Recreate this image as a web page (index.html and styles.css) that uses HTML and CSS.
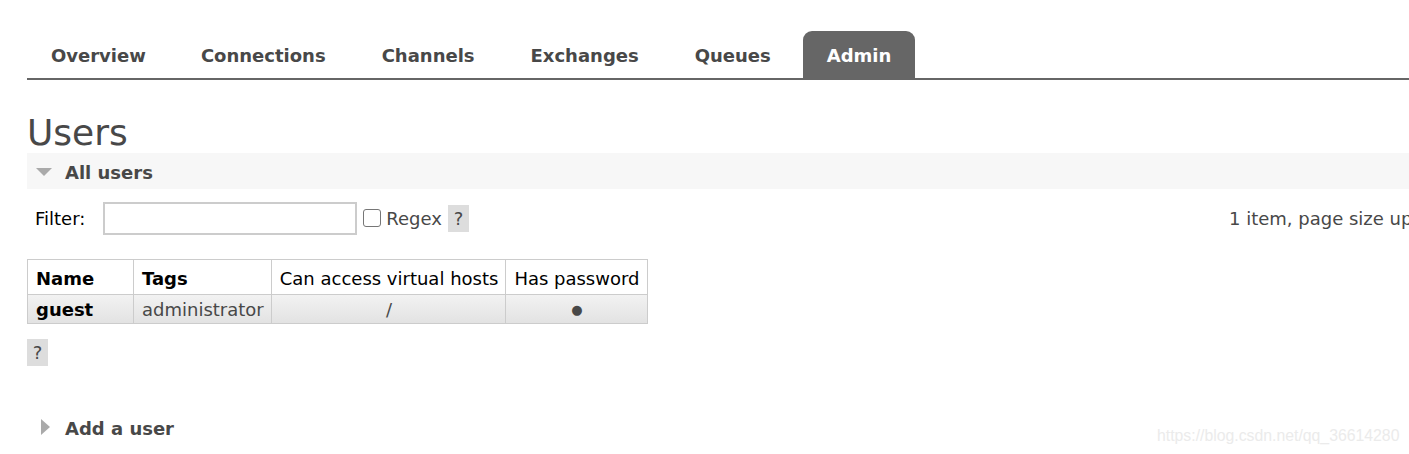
FILE: index.html
```html
<!DOCTYPE html>
<html>
<head>
<meta charset="utf-8">
<link rel="stylesheet" href="styles.css">
</head>
<body>
<div class="page">
  <nav class="tabs">
    <a class="tab">Overview</a>
    <a class="tab">Connections</a>
    <a class="tab">Channels</a>
    <a class="tab">Exchanges</a>
    <a class="tab">Queues</a>
    <a class="tab active">Admin</a>
  </nav>

  <h1 class="title">Users</h1>

  <div class="section-head open"><span class="tri-down"></span>All users</div>

  <div class="filter-row">
    <div class="filter-left">
      <label class="filter-label">Filter:</label>
      <input class="filter-input" type="text">
      <span class="check"></span>
      <span class="regex">Regex</span>
      <span class="help">?</span>
    </div>
    <div class="filter-right">1 item, page size up to: <span class="page-size">100</span></div>
  </div>

  <table class="users">
    <thead>
      <tr>
        <th class="bold col-name">Name</th>
        <th class="bold">Tags</th>
        <th>Can access virtual hosts</th>
        <th>Has password</th>
      </tr>
    </thead>
    <tbody>
      <tr>
        <td class="user">guest</td>
        <td class="tags">administrator</td>
        <td class="center">/</td>
        <td class="center dot">●</td>
      </tr>
    </tbody>
  </table>

  <span class="help help-table">?</span>

  <div class="section-head closed"><span class="tri-right"></span>Add a user</div>
</div>
<div class="watermark">https://blog.csdn.net/qq_36614280</div>
</body>
</html>
```

FILE: styles.css
```css
html, body {
  margin: 0;
  padding: 0;
  overflow: hidden;
  background: #fff;
}
body {
  font-family: "DejaVu Sans", Verdana, sans-serif;
  font-size: 18px;
  color: #484848;
  width: 1409px;
  height: 454px;
  position: relative;
}
.page {
  padding-left: 27px;
  width: 1700px;
}
.tabs {
  display: flex;
  gap: 8px;
  padding-top: 31px;
  border-bottom: 2px solid #666;
  height: 47px;
  box-sizing: content-box;
}
.tab {
  display: block;
  padding: 0 24px;
  height: 47px;
  line-height: 50px;
  font-weight: bold;
  color: #484848;
  border-radius: 9px 9px 0 0;
}
.tab:first-child {
  margin-right: -1px;
}
.tab.active {
  background: #666;
  color: #fff;
}
.title {
  margin: 0;
  font-size: 36px;
  font-weight: normal;
  color: #484848;
  height: 73px;
  line-height: 105px;
  overflow: visible;
}
.section-head {
  display: flex;
  align-items: center;
  height: 36px;
  font-weight: bold;
  padding-left: 9px;
  padding-top: 2px;
  box-sizing: border-box;
}
.section-head.open {
  background: #f7f7f7;
}
.tri-down {
  display: block;
  width: 0;
  height: 0;
  border-left: 8px solid transparent;
  border-right: 8px solid transparent;
  border-top: 8px solid #aaa;
  margin-right: 13px;
  margin-top: -1px;
}
.tri-right {
  display: block;
  width: 0;
  height: 0;
  border-top: 8px solid transparent;
  border-bottom: 8px solid transparent;
  border-left: 9px solid #aaa;
  margin-left: 5px;
  margin-right: 15px;
  margin-top: -3px;
}
.filter-row {
  display: grid;
  grid-template-columns: 1202px max-content;
  align-items: center;
  margin-top: 12px;
  height: 34px;
}
.filter-left {
  display: flex;
  align-items: center;
  padding-left: 8px;
}
.filter-label {
  color: #000;
  margin-right: 18px;
}
.filter-input {
  box-sizing: border-box;
  width: 254px;
  height: 33px;
  border: 2px solid #ccc;
  margin: 0;
  padding: 0;
  background: #fff;
}
.check {
  display: block;
  width: 16px;
  height: 16px;
  border: 1px solid #767676;
  border-radius: 3px;
  margin-left: 6px;
  margin-right: 5px;
  background: #fff;
}
.regex {
  margin-right: 6px;
}
.help {
  display: inline-block;
  width: 21px;
  height: 27px;
  line-height: 27px;
  text-align: center;
  background: #ddd;
  color: #484848;
}
.filter-right {
  white-space: nowrap;
}
.page-size {
  display: inline-block;
  border: 2px solid #ccc;
  padding: 2px 6px;
}
.users {
  border-collapse: collapse;
  margin-top: 24px;
}
.users th, .users td {
  border: 1px solid #ccc;
  padding: 0 7px 0 8px;
  white-space: nowrap;
}
.users th.col-name {
  width: 90px;
}
.users th {
  height: 31px;
  padding-top: 3px;
  font-weight: normal;
  color: #000;
  text-align: left;
  background: #fff;
}
.users th.bold {
  font-weight: bold;
}
.users tbody tr {
  background: linear-gradient(#f2f2f2, #e2e2e2);
}
.users td {
  height: 27px;
  padding-top: 1px;
}
.users td.user {
  font-weight: bold;
  color: #000;
}
.users td.center {
  text-align: center;
}
.users td.dot {
  font-size: 13px;
  color: #484848;
}
.help-table {
  display: block;
  margin-top: 15px;
}
.section-head.closed {
  margin-top: 43px;
  height: 36px;
}
.watermark {
  position: absolute;
  left: 1157px;
  top: 427px;
  font-family: "Liberation Sans", Arial, sans-serif;
  font-size: 15.8px;
  color: #ebebeb;
}
```
